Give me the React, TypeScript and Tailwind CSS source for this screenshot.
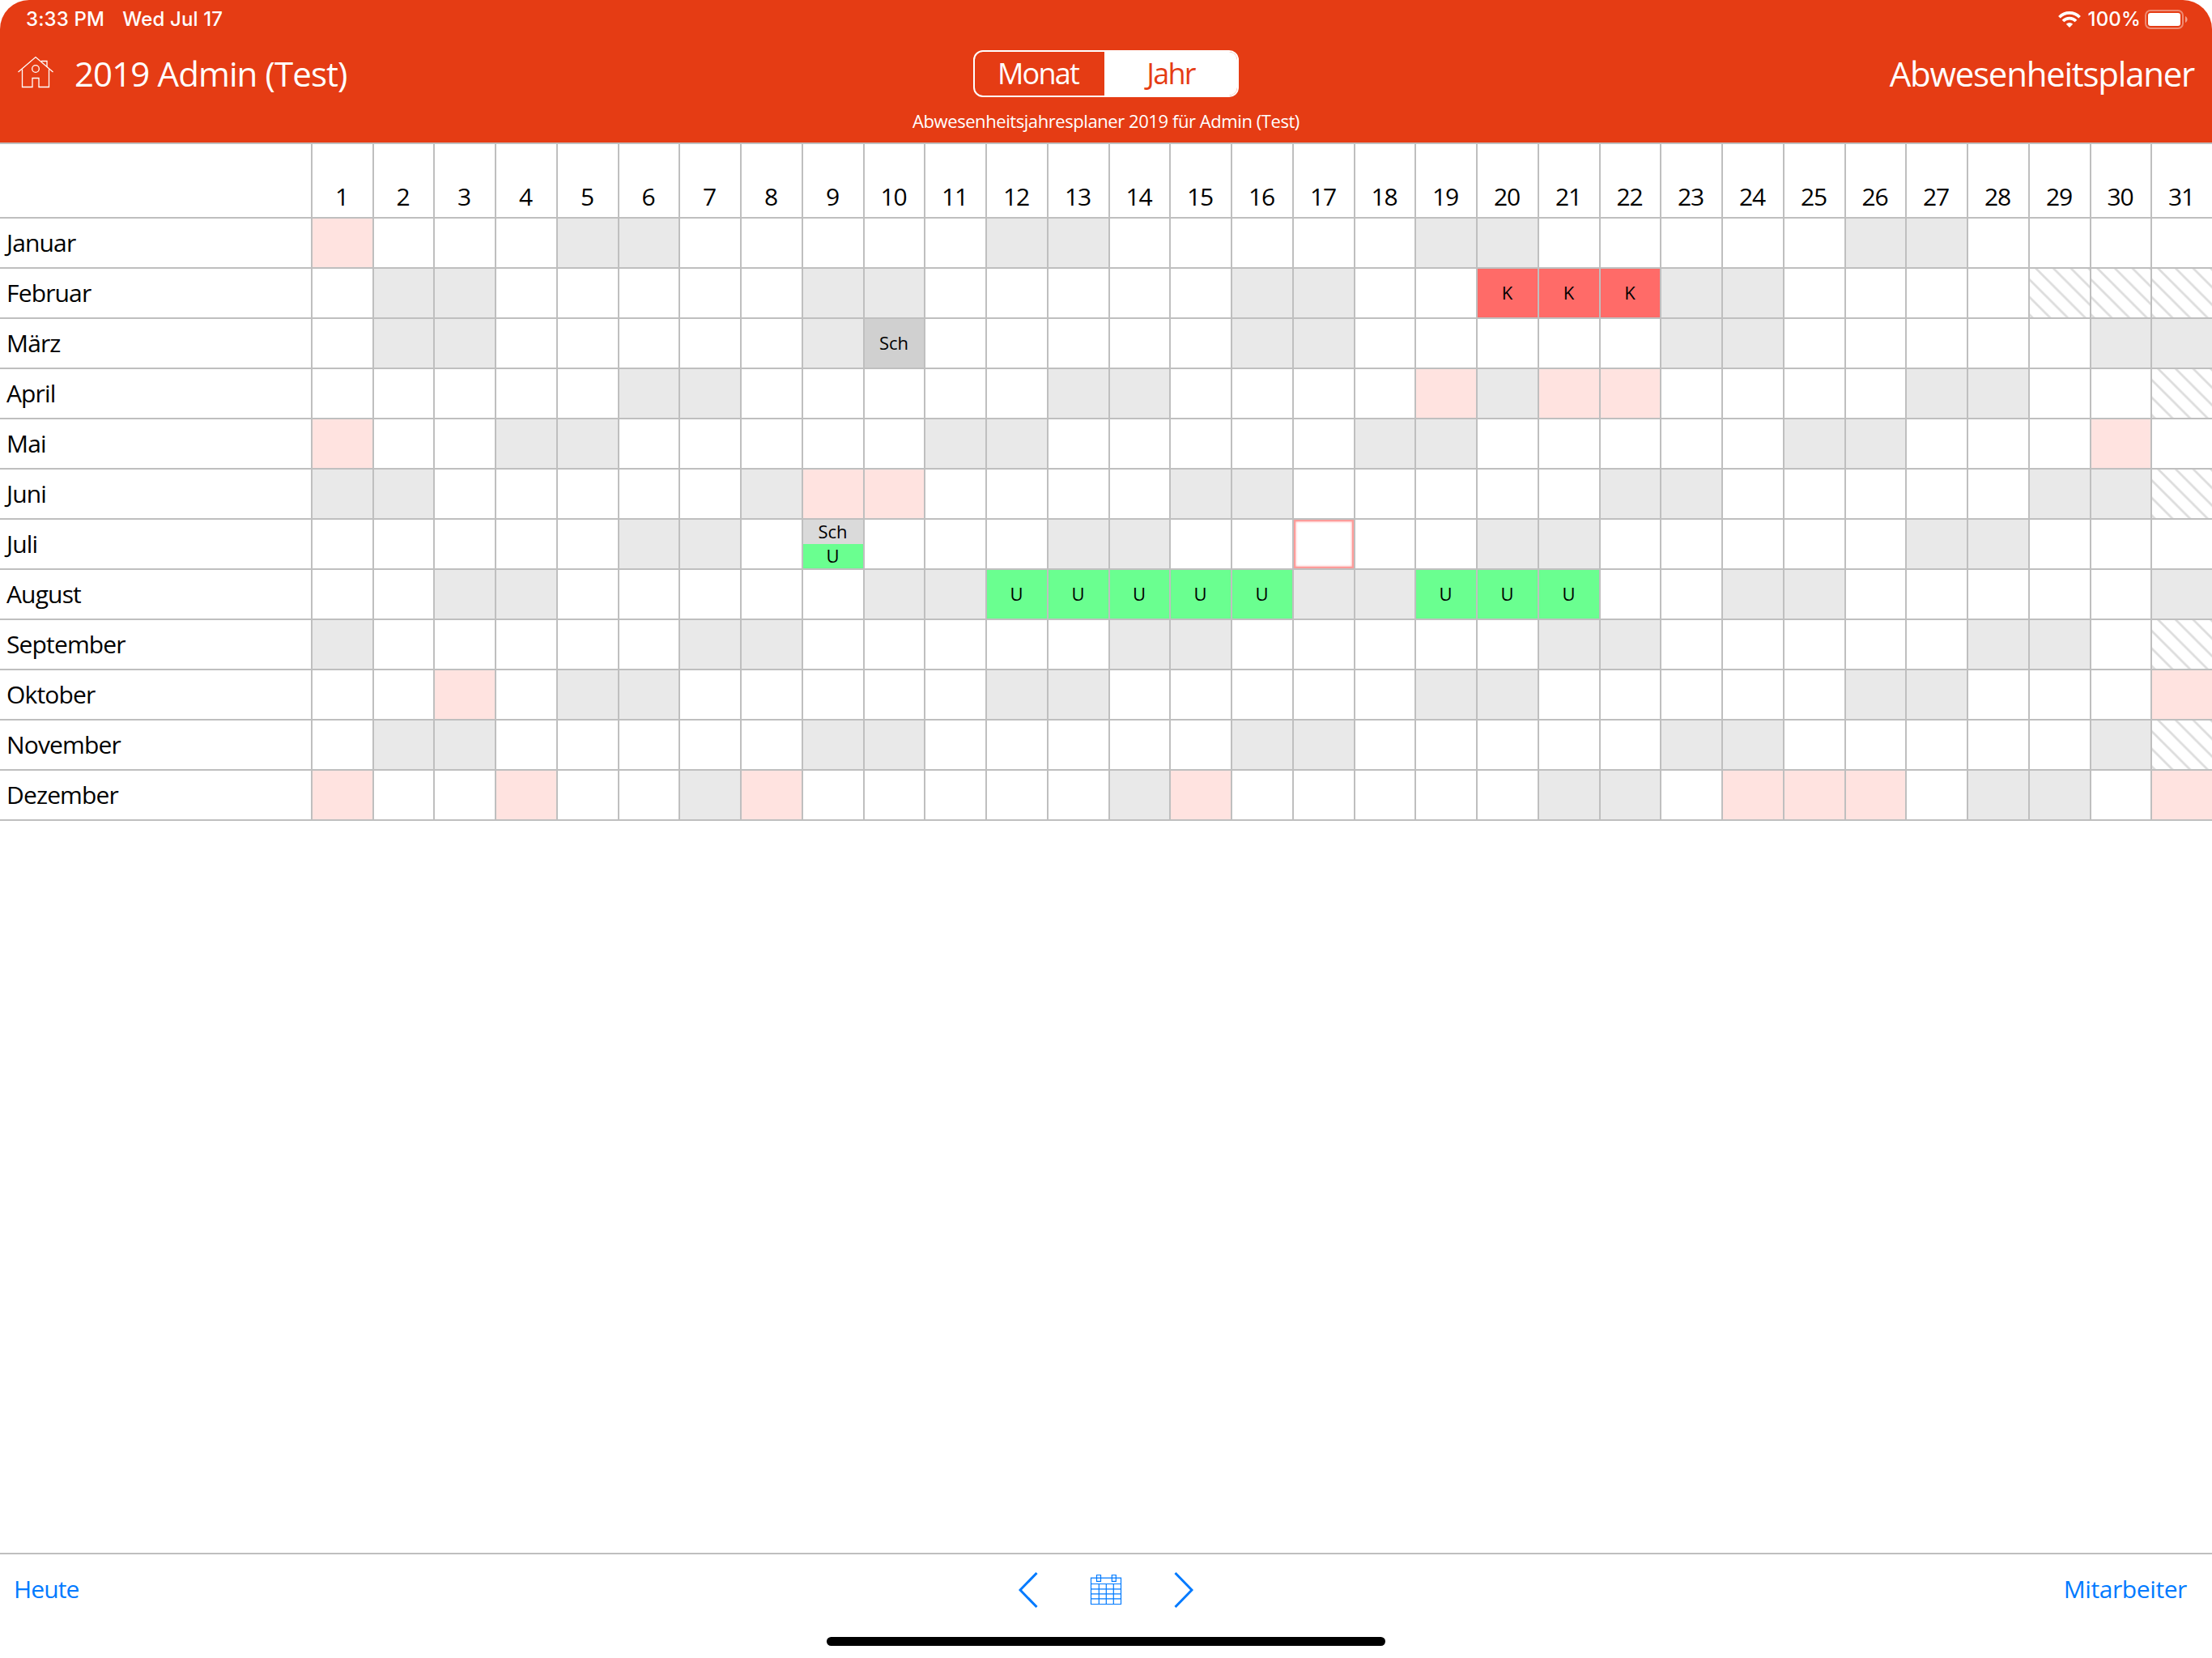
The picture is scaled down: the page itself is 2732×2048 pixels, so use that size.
import type { ReactNode } from 'react';

interface Entry {
  code: string;
  tone: string;
}

interface Month {
  name: string;
  weekend: number[];
  holiday: number[];
  length: number;
  entries?: Record<number, Entry[]>;
}

const sick: Entry[] = [{ code: 'K', tone: 'bg-[#ff6b68]' }];
const vacation: Entry[] = [{ code: 'U', tone: 'bg-[#6aff90]' }];

const months: Month[] = [
  { name: 'Januar', weekend: [5, 6, 12, 13, 19, 20, 26, 27], holiday: [1], length: 31 },
  {
    name: 'Februar',
    weekend: [2, 3, 9, 10, 16, 17, 23, 24],
    holiday: [],
    length: 28,
    entries: { 20: sick, 21: sick, 22: sick },
  },
  {
    name: 'März',
    weekend: [2, 3, 9, 10, 16, 17, 23, 24, 30, 31],
    holiday: [],
    length: 31,
    entries: { 10: [{ code: 'Sch', tone: 'bg-[#d0d0d0]' }] },
  },
  { name: 'April', weekend: [6, 7, 13, 14, 20, 27, 28], holiday: [19, 21, 22], length: 30 },
  { name: 'Mai', weekend: [4, 5, 11, 12, 18, 19, 25, 26], holiday: [1, 30], length: 31 },
  { name: 'Juni', weekend: [1, 2, 8, 15, 16, 22, 23, 29, 30], holiday: [9, 10], length: 30 },
  {
    name: 'Juli',
    weekend: [6, 7, 13, 14, 20, 21, 27, 28],
    holiday: [],
    length: 31,
    entries: { 9: [{ code: 'Sch', tone: 'bg-[#dadada]' }, ...vacation] },
  },
  {
    name: 'August',
    weekend: [3, 4, 10, 11, 17, 18, 24, 25, 31],
    holiday: [],
    length: 31,
    entries: {
      12: vacation,
      13: vacation,
      14: vacation,
      15: vacation,
      16: vacation,
      19: vacation,
      20: vacation,
      21: vacation,
    },
  },
  { name: 'September', weekend: [1, 7, 8, 14, 15, 21, 22, 28, 29], holiday: [], length: 30 },
  { name: 'Oktober', weekend: [5, 6, 12, 13, 19, 20, 26, 27], holiday: [3, 31], length: 31 },
  { name: 'November', weekend: [2, 3, 9, 10, 16, 17, 23, 24, 30], holiday: [], length: 30 },
  { name: 'Dezember', weekend: [7, 14, 21, 22, 28, 29], holiday: [1, 4, 8, 15, 24, 25, 26, 31], length: 31 },
];

const TODAY = { month: 'Juli', day: 17 };
const LABEL_WIDTH = 386;
const DAY_WIDTH = 75.745;

const days = Array.from({ length: 31 }, (_, i) => i + 1);

// Whole pixel columns keep every grid line crisp
const edge = (n: number) => Math.round(LABEL_WIDTH + n * DAY_WIDTH);
const columns = [
  `${LABEL_WIDTH}px`,
  ...days.slice(0, 30).map((d) => `${edge(d) - edge(d - 1)}px`),
  'minmax(0, 1fr)',
].join(' ');

function HomeIcon() {
  return (
    <svg className="block" width="46" height="44" viewBox="0 0 46 44" fill="none" stroke="white" strokeWidth="1.3">
      <path d="M0.500 20 22 1.500 43.500 20" />
      <path d="M5.500 16.500V38.500H18V27.500H26V38.500H38.500V16.500" />
      <path d="M29 6.500H36V13.500" />
      <circle cx="22" cy="16" r="4.300" />
    </svg>
  );
}

function WifiIcon() {
  return (
    <svg className="block" width="28" height="20" viewBox="0 0 28 20" fill="none" stroke="white" strokeWidth="3.7">
      <path d="M1.400 7.200A17.700 17.700 0 0 1 26.600 7.200" />
      <path d="M6 12A11.200 11.200 0 0 1 22 12" />
      <path d="M14 20 9.800 15.700A6 6 0 0 1 18.200 15.700Z" fill="white" stroke="none" />
    </svg>
  );
}

function BatteryIcon() {
  return (
    <svg className="block" width="54" height="24" viewBox="0 0 54 24">
      <rect x="1" y="1" width="46" height="22" rx="6" fill="none" stroke="white" strokeOpacity="0.4" strokeWidth="2" />
      <rect x="4" y="4" width="40" height="16" rx="3" fill="white" />
      <path d="M50 8C53.400 9.500 53.400 14.500 50 16Z" fill="white" fillOpacity="0.5" />
    </svg>
  );
}

function CalendarIcon() {
  return (
    <svg className="block" width="40" height="40" viewBox="0 0 40 40" fill="none" stroke="#007aff" strokeWidth="1.2">
      <path d="M1.500 5.200H38.500V37.500H1.500Z" />
      <path d="M8.500 1.500H13.500V9.300H8.500ZM27.300 1.500H32.300V9.300H27.300Z" />
      <path d="M1.500 12.500H38.500M1.500 18.800H38.500M1.500 24.800H38.500M1.500 30.800H38.500" />
      <path d="M11.300 12.500V37.500M20.300 12.500V37.500M29.300 12.500V37.500" />
    </svg>
  );
}

function Chevron({ points }: { points: string }) {
  return (
    <svg className="block" width="24" height="44" viewBox="0 0 24 44" fill="none" stroke="#007aff" strokeWidth="3">
      <polyline points={points} />
    </svg>
  );
}

function Hatch({ id }: { id: string }) {
  return (
    <svg className="block h-[60px] w-full" fill="none">
      <defs>
        <pattern id={id} width="21.700" height="21.700" patternUnits="userSpaceOnUse" patternTransform="translate(8 0)">
          <path d="M-5 -5 27 27M16.700 -5 27 5.300M-5 16.700 5 26.700" stroke="#dcdcdc" strokeWidth="2.700" />
        </pattern>
      </defs>
      <rect width="100%" height="100%" fill={`url(#${id})`} />
    </svg>
  );
}

function DayCell({ month, day }: { month: Month; day: number }) {
  const entries = month.entries?.[day];
  const isToday = month.name === TODAY.month && day === TODAY.day;
  let tone = 'bg-white';
  let content: ReactNode = null;

  if (day > month.length) {
    content = <Hatch id={`hatch-${month.name}-${day}`} />;
  } else if (month.holiday.includes(day)) {
    tone = 'bg-[#ffe3e0]';
  } else if (month.weekend.includes(day)) {
    tone = 'bg-[#e9e9e9]';
  }

  if (entries) {
    content = entries.map((entry) => (
      <div key={entry.code} className={`flex min-h-0 flex-1 items-center justify-center pr-px pb-[2px] ${entry.tone}`}>
        <span className="text-[22px] leading-none">{entry.code}</span>
      </div>
    ));
  } else if (isToday) {
    content = <div className="h-full border-2 border-[#ff9c9a] shadow-[inset_0_0_3px_#ff8a88]" />;
  }

  return (
    <div className={`flex min-h-0 flex-col border-b-2 border-[#bfbfbf] ${day < 31 ? 'border-r-2' : ''} ${tone}`}>
      {content}
    </div>
  );
}

function Header() {
  return (
    <header className="h-[176px] rounded-t-[36px] bg-[#e53c14] text-white">
      <div className="flex h-[48px] items-center justify-between pr-[29px] pl-8 font-['Inter',sans-serif] text-2xl font-medium tracking-[0.15px]">
        <div className="flex gap-[22px]">
          <span>3:33 PM</span>
          <span>Wed Jul 17</span>
        </div>
        <div className="flex items-center">
          <WifiIcon />
          <span className="ml-[9px]">100%</span>
          <span className="ml-[5px]">
            <BatteryIcon />
          </span>
        </div>
      </div>
      <div className="grid h-[86px] grid-cols-3 items-center px-[22px]">
        <div className="flex items-center gap-6">
          <HomeIcon />
          <h1 className="text-[42px] leading-none tracking-[-0.9px]">2019 Admin (Test)</h1>
        </div>
        <div className="flex h-[58px] w-[328px] justify-self-center overflow-hidden rounded-[12px] border-2 border-white text-[36px] leading-none tracking-[-1.8px]">
          <button className="w-[160px] pr-1">Monat</button>
          <button className="flex-1 bg-white text-[#e53c14]">Jahr</button>
        </div>
        <h2 className="justify-self-end text-[42px] leading-none tracking-[-1.25px]">Abwesenheitsplaner</h2>
      </div>
      <p className="pt-[4px] text-center text-[22px] leading-none tracking-[-0.43px]">
        Abwesenheitsjahresplaner 2019 für Admin (Test)
      </p>
    </header>
  );
}

function YearGrid() {
  return (
    <main className="flex-1 border-t-2 border-[#bfbfbf] text-[30px] leading-none">
      <div className="grid h-[92px]" style={{ gridTemplateColumns: columns }}>
        <div className="border-r-2 border-b-2 border-[#bfbfbf]" />
        {days.map((day) => (
          <div
            key={day}
            className={`flex items-end justify-center border-b-2 border-[#bfbfbf] pr-[2px] pb-[10px] tracking-[-1.2px] ${day < 31 ? 'border-r-2' : ''}`}
          >
            {day}
          </div>
        ))}
      </div>
      {months.map((month) => (
        <div key={month.name} className="grid h-[62px] grid-rows-[62px]" style={{ gridTemplateColumns: columns }}>
          <div className="flex items-center border-r-2 border-b-2 border-[#bfbfbf] pb-px pl-2 tracking-[-0.85px]">
            {month.name}
          </div>
          {days.map((day) => (
            <DayCell key={day} month={month} day={day} />
          ))}
        </div>
      ))}
    </main>
  );
}

function Footer() {
  return (
    <footer className="flex h-[130px] flex-col items-center border-t-2 border-[#bfbfbf] text-[30px] leading-none text-[#007aff]">
      <div className="grid h-[88px] w-full grid-cols-3 items-center px-[17px]">
        <button className="justify-self-start pb-[2px] tracking-[-0.9px]">Heute</button>
        <div className="flex items-center justify-center gap-[64px]">
          <Chevron points="22.500,1 2,22 22.500,43" />
          <CalendarIcon />
          <Chevron points="1.500,1 22,22 1.500,43" />
        </div>
        <button className="mr-[14px] justify-self-end pb-[2px] tracking-[-0.4px]">Mitarbeiter</button>
      </div>
      <div className="mt-[14px] h-[11px] w-[690px] rounded-full bg-black" />
    </footer>
  );
}

export default function App() {
  return (
    <div className="flex h-[2048px] w-[2732px] flex-col overflow-hidden bg-white font-['Open_Sans','Noto_Sans',sans-serif] text-black">
      <Header />
      <YearGrid />
      <Footer />
    </div>
  );
}
